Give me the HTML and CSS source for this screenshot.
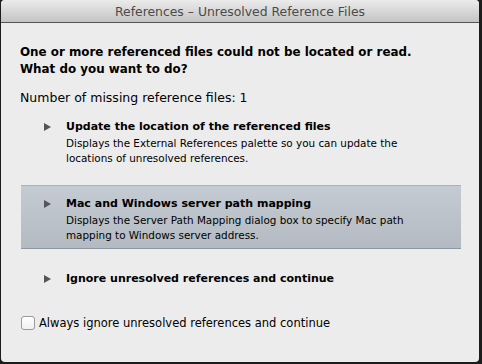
FILE: index.html
```html
<!DOCTYPE html>
<html lang="en">
<head>
    <meta charset="UTF-8">
    <title>References - Unresolved Reference Files</title>
    <link rel="stylesheet" href="styles.css">
</head>
<body>
    <!-- Dialog window -->
    <div class="window">
        <div class="titlebar">References – Unresolved Reference Files</div>

        <div class="content">
            <p class="question">One or more referenced files could not be located or read.<br>What do you want to do?</p>
            <p class="count">Number of missing reference files: 1</p>

            <div class="options">
                <div class="option first">
                    <span class="arrow"></span>
                    <div class="option-text">
                        <div class="option-title">Update the location of the referenced files</div>
                        <div class="option-desc">Displays the External References palette so you can update the<br>locations of unresolved references.</div>
                    </div>
                </div>
                <div class="option selected">
                    <span class="arrow"></span>
                    <div class="option-text">
                        <div class="option-title">Mac and Windows server path mapping</div>
                        <div class="option-desc">Displays the Server Path Mapping dialog box to specify Mac path<br>mapping to Windows server address.</div>
                    </div>
                </div>
                <div class="option last">
                    <span class="arrow"></span>
                    <div class="option-text">
                        <div class="option-title">Ignore unresolved references and continue</div>
                    </div>
                </div>
            </div>

            <label class="check">
                <span class="box"></span>
                Always ignore unresolved references and continue
            </label>
        </div>
    </div>
</body>
</html>
```

FILE: styles.css
```css
html, body {
    margin: 0;
    padding: 0;
    background: #1c1c1c;
    height: 100%;
}

body {
    font-family: "DejaVu Sans", sans-serif;
    font-size: 12px;
    color: #000;
}

.window {
    margin-left: 1px;
    width: 478px;
    height: 362px;
    background: #ececec;
    border-radius: 4px;
    overflow: hidden;
}

.titlebar {
    height: 22px;
    line-height: 23px;
    text-align: center;
    font-size: 12.4px;
    color: #4a4a4a;
    background: linear-gradient(#ebebeb, #c4c4c4);
    border-bottom: 1px solid #555;
}

.content {
    padding: 21px 0 0 19px;
}

.question {
    margin: 0;
    font-size: 11.9px;
    font-weight: bold;
    line-height: 17px;
}

.count {
    margin: 11px 0 0;
    font-size: 12.5px;
    line-height: 17px;
}

.options {
    margin-top: 14px;
    width: 440px;
    margin-left: 1px;
}

.option {
    display: flex;
    padding-left: 23px;
}

.option.selected {
    background: linear-gradient(#c4cbd2, #b3bac1);
    border-top: 1px solid #a9b1b9;
    border-bottom: 1px solid #8f98a1;
    margin-top: 19px;
    padding-top: 11px;
    padding-bottom: 5px;
}

.option.last {
    margin-top: 23px;
}

.arrow {
    width: 0;
    height: 0;
    margin-top: 3px;
    border-left: 7px solid #555;
    border-top: 4px solid transparent;
    border-bottom: 4px solid transparent;
    margin-right: 15px;
}

.option-title {
    font-size: 11px;
    font-weight: bold;
    line-height: 14px;
}

.option-desc {
    margin-top: 2px;
    font-size: 10.4px;
    line-height: 15px;
}

.check {
    display: flex;
    align-items: center;
    gap: 4px;
    margin-top: 30px;
    margin-left: 1px;
    font-size: 11.5px;
    line-height: 14px;
}

.box {
    width: 12px;
    height: 12px;
    border: 1px solid #9a9a9a;
    border-radius: 3px;
    background: linear-gradient(#fff, #f0f0f0);
}
```
